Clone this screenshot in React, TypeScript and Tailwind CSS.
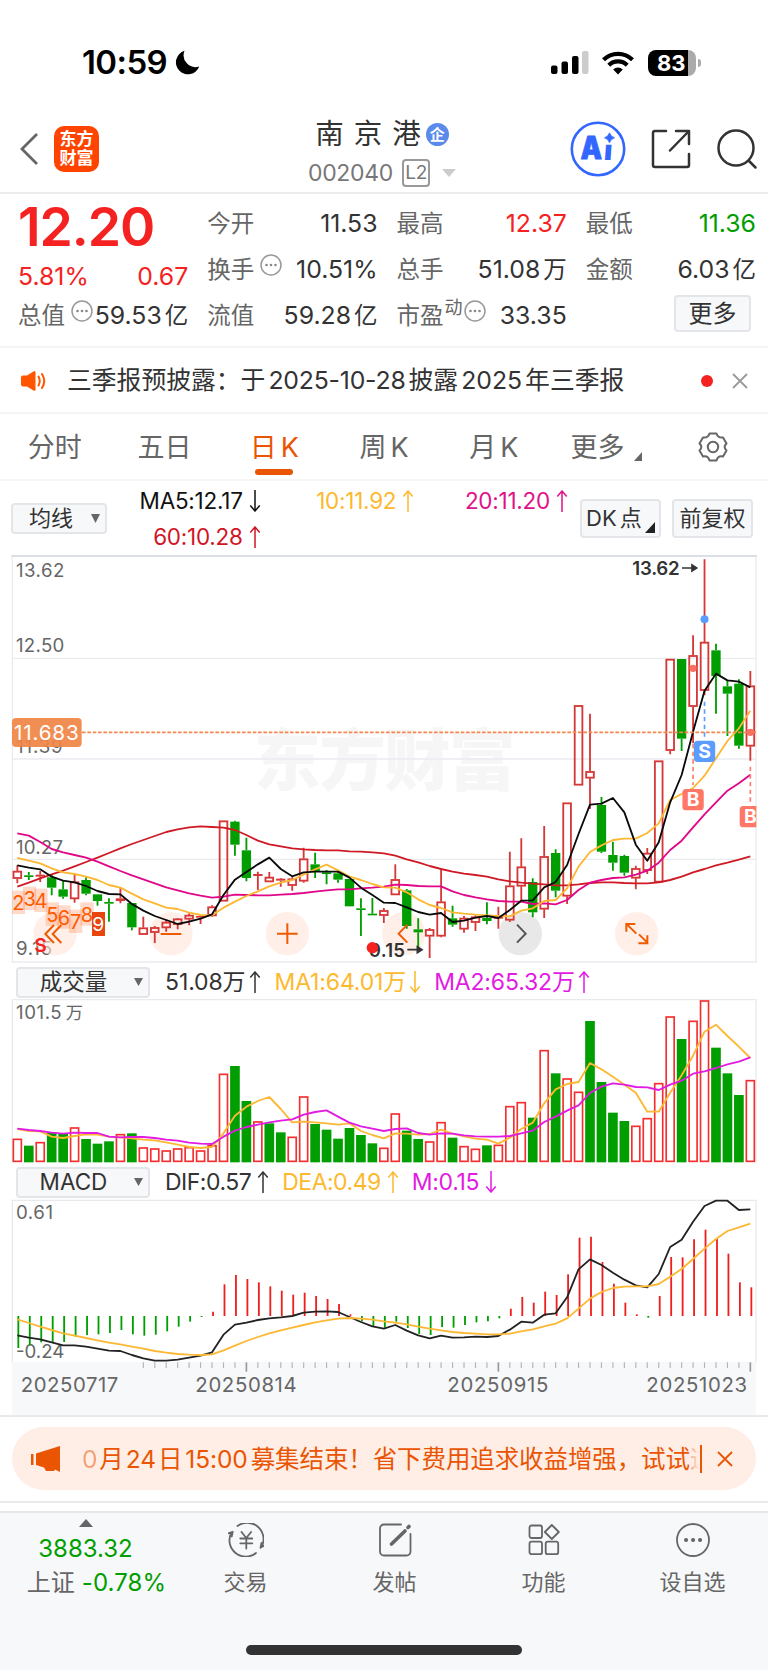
import type { ReactNode } from 'react';
import clsx from 'clsx';

// All charts are drawn on a 3x grid: 2304 units wide for a 768px page
const STEP = 34.36;
const FIRST = 52;
const xAt = (i: number) => FIRST + i * STEP;

const UP = '#d63838';
const DOWN = '#009e00';

type Candle = [dir: 'r' | 'g', top: number, bottom: number, high: number, low: number];

const candles: Candle[] = [
  ['r', 963, 986, 946, 1000], ['g', 976, 981, 966, 990], ['r', 974, 980, 963, 996], ['g', 982, 1013, 975, 1036],
  ['g', 1018, 1040, 993, 1046], ['r', 995, 1047, 972, 1058], ['g', 990, 1031, 982, 1036], ['g', 1033, 1053, 1033, 1067],
  ['g', 1056, 1061, 1045, 1115], ['r', 1045, 1053, 1012, 1060], ['g', 1059, 1132, 1059, 1141], ['r', 1133, 1154, 1100, 1154],
  ['r', 1132, 1148, 1128, 1179], ['r', 1116, 1134, 1108, 1145], ['r', 1106, 1124, 1104, 1138], ['r', 1095, 1108, 1090, 1126],
  ['r', 1098, 1103, 1094, 1122], ['r', 1070, 1098, 1066, 1100], ['r', 812, 1054, 812, 1054], ['g', 815, 884, 812, 917],
  ['g', 901, 984, 863, 994], ['r', 972, 978, 965, 1020], ['r', 981, 996, 966, 996], ['r', 986, 992, 984, 1010],
  ['r', 986, 1007, 982, 1022], ['r', 926, 994, 893, 998], ['g', 943, 966, 908, 984], ['g', 967, 972, 960, 1003],
  ['g', 970, 989, 966, 998], ['g', 987, 1069, 987, 1069], ['g', 1075, 1080, 1045, 1158], ['g', 1091, 1096, 1044, 1096],
  ['r', 1081, 1097, 1074, 1119], ['r', 988, 1035, 943, 1035], ['g', 1021, 1128, 1017, 1136], ['g', 1138, 1147, 1105, 1200],
  ['r', 1138, 1159, 1134, 1224], ['r', 1055, 1159, 957, 1162], ['g', 1105, 1124, 1067, 1130], ['r', 1104, 1138, 1098, 1148],
  ['r', 1100, 1118, 1096, 1143], ['g', 1104, 1113, 1057, 1123], ['r', 1101, 1106, 1070, 1136], ['r', 1007, 1111, 905, 1116],
  ['r', 950, 1009, 865, 1055], ['g', 996, 1087, 985, 1102], ['r', 919, 1078, 828, 1104], ['g', 909, 1022, 898, 1042],
  ['r', 758, 1039, 758, 1062], ['r', 466, 706, 466, 706], ['r', 664, 685, 491, 777], ['g', 765, 905, 741, 909],
  ['g', 915, 938, 875, 962], ['g', 918, 968, 914, 977], ['r', 955, 985, 947, 1018], ['r', 909, 962, 894, 972],
  ['r', 632, 997, 632, 997], ['r', 327, 602, 327, 613], ['g', 327, 566, 327, 603], ['r', 316, 470, 256, 580],
  ['r', 276, 422, 28, 436], ['g', 301, 378, 281, 491], ['g', 409, 431, 391, 558], ['g', 401, 587, 388, 596],
  ['r', 407, 589, 363, 632],
];

const ma5 = [
  946, 953, 958, 980, 992, 997, 1008, 1023, 1032, 1033, 1062, 1082, 1098, 1110, 1122, 1115, 1106, 1093, 1035, 989, 966, 943,
  923, 957, 979, 967, 965, 965, 965, 983, 1013, 1035, 1058, 1059, 1072, 1086, 1094, 1089, 1116, 1112, 1103, 1098, 1104, 1080,
  1052, 1051, 1012, 996, 945, 852, 764, 761, 744, 787, 884, 932, 877, 757, 675, 545, 422, 371, 391, 395, 412,
];
const ma10 = [
  924, 932, 940, 955, 967, 972, 980, 990, 1005, 1013, 1031, 1048, 1060, 1073, 1077, 1088, 1095, 1096, 1073, 1055, 1038, 1024,
  1009, 998, 990, 973, 958, 944, 961, 980, 990, 1002, 1012, 1013, 1027, 1048, 1065, 1074, 1087, 1091, 1094, 1096, 1098, 1099,
  1082, 1075, 1053, 1050, 1015, 950, 906, 886, 870, 866, 866, 849, 820, 750, 732, 714, 677, 625, 573, 535, 482,
];
const ma20 = [
  850, 857, 876, 897, 907, 915, 923, 935, 949, 963, 976, 988, 1000, 1012, 1021, 1030, 1037, 1043, 1040, 1034, 1035, 1036,
  1036, 1034, 1032, 1029, 1025, 1021, 1018, 1018, 1015, 1013, 1010, 1004, 1005, 1008, 1009, 1009, 1024, 1035, 1042, 1048,
  1053, 1055, 1055, 1062, 1060, 1063, 1050, 1020, 998, 990, 984, 982, 974, 962, 938, 900, 872, 832, 793, 757, 722, 700, 674,
];
const ma60 = [
  1010, 998, 985, 973, 962, 949, 936, 923, 909, 895, 882, 870, 858, 846, 838, 832, 829, 831, 833, 840, 855, 872, 883, 889,
  895, 898, 900, 901, 901, 904, 905, 907, 910, 917, 928, 937, 948, 957, 965, 971, 975, 980, 988, 994, 998, 1001, 1003, 1006,
  1006, 1003, 999, 997, 997, 999, 1000, 1000, 997, 990, 980, 967, 957, 946, 938, 929, 919,
];

// Days whose volume bar is green
const volumeDown = new Set([
  1, 3, 4, 6, 7, 8, 10, 19, 20, 22, 23, 26, 27, 28, 29, 30, 31, 34, 35, 38, 41, 45, 47, 50, 51, 52, 53, 58, 61, 62, 63,
]);
const volumeTops = [
  536, 557, 546, 516, 521, 502, 537, 551, 544, 522, 520, 562, 565, 571, 565, 561, 571, 555, 341, 318, 423, 484, 490, 517, 530,
  409, 492, 509, 536, 504, 525, 550, 563, 460, 512, 537, 544, 486, 533, 558, 566, 556, 554, 438, 426, 473, 270, 340, 355, 395,
  183, 366, 458, 483, 497, 474, 369, 169, 237, 182, 121, 263, 340, 405, 360,
];
const volMa1 = [
  507, 513, 514, 530, 534, 528, 523, 524, 530, 532, 535, 539, 541, 547, 554, 561, 564, 561, 520, 467, 440, 423, 411, 447, 487,
  485, 487, 490, 494, 490, 513, 525, 535, 520, 521, 524, 522, 509, 521, 529, 536, 539, 551, 533, 507, 488, 430, 388, 372, 366,
  309, 328, 350, 374, 398, 455, 455, 398, 346, 287, 215, 194, 228, 260, 294,
];
const volMa2 = [
  506, 510, 513, 518, 521, 518, 519, 519, 530, 532, 531, 531, 534, 539, 542, 548, 551, 552, 530, 512, 501, 494, 487, 482, 478,
  464, 456, 451, 470, 488, 499, 506, 513, 507, 505, 519, 524, 520, 521, 526, 529, 530, 530, 528, 520, 512, 486, 470, 452, 436,
  399, 380, 370, 374, 381, 382, 390, 374, 362, 341, 334, 324, 313, 305, 292,
];

const ZERO = 468;
const macdBars = [
  564, 556, 547, 546, 546, 530, 525, 523, 519, 510, 523, 527, 524, 514, 500, 485, 471, 455, 373, 345, 357, 367, 379, 392, 404,
  398, 408, 417, 432, 463, 484, 500, 503, 485, 504, 522, 525, 501, 503, 495, 487, 484, 475, 446, 411, 428, 395, 405, 343, 233,
  230, 306, 371, 428, 463, 473, 408, 291, 292, 238, 209, 236, 281, 367, 382,
];
const dif = [
  526, 533, 538, 547, 556, 556, 560, 566, 572, 573, 585, 595, 602, 602, 599, 593, 587, 577, 524, 494, 488, 480, 475, 472, 468,
  458, 455, 454, 456, 471, 486, 499, 506, 495, 512, 526, 535, 527, 533, 532, 530, 531, 528, 509, 485, 488, 464, 460, 412, 328,
  298, 315, 338, 359, 376, 382, 342, 261, 239, 185, 138, 122, 122, 150, 148,
];
const dea = [
  478, 489, 500, 510, 520, 527, 534, 541, 548, 553, 560, 566, 573, 578, 582, 584, 585, 583, 571, 557, 543, 531, 520, 511, 503,
  495, 487, 481, 476, 474, 476, 479, 484, 488, 493, 500, 506, 511, 516, 519, 521, 523, 523, 521, 514, 508, 499, 491, 475, 446,
  416, 396, 384, 380, 379, 379, 372, 350, 327, 297, 266, 237, 213, 202, 191,
];

function Line({ data, color, width = 5.5 }: { data: number[]; color: string; width?: number }) {
  return (
    <polyline
      points={data.map((y, i) => `${xAt(i).toFixed(1)},${y}`).join(' ')}
      fill="none"
      stroke={color}
      strokeWidth={width}
      strokeLinejoin="round"
    />
  );
}

function Label({ x, y, w, children, fill = '#666', size = 56, weight = 400 }: {
  x: number; y: number; w: number; children: string; fill?: string; size?: number; weight?: number;
}) {
  return (
    <text x={x} y={y} textLength={w} fontSize={size} fill={fill} fontWeight={weight}>{children}</text>
  );
}

function Arrow({ down = false }: { down?: boolean }) {
  return (
    <svg viewBox="0 0 12 22" className={clsx('h-[22px] w-3 shrink-0', down && 'rotate-180')} fill="none" stroke="currentColor" strokeWidth="1.5">
      <path d="M6 22V1M1.3 6.5 6 1l4.7 5.5" />
    </svg>
  );
}

function Info() {
  return (
    <svg viewBox="0 0 22 22" className="h-[22px] w-[22px] shrink-0">
      <circle cx="11" cy="11" r="10" fill="none" stroke="#999" strokeWidth="1.5" />
      <circle cx="6.5" cy="11" r="1.3" fill="#888" />
      <circle cx="11" cy="11" r="1.3" fill="#888" />
      <circle cx="15.5" cy="11" r="1.3" fill="#888" />
    </svg>
  );
}

function StatusBar() {
  return (
    <div className="flex h-[100px] items-center justify-between pt-[25px] pr-[67px] pl-[82px] text-black">
      <div className="flex items-center gap-[7px]">
        <span className="text-[33px] leading-none font-semibold tracking-[-0.6px]">10:59</span>
        <svg viewBox="0 0 26 26" className="h-[26px] w-[26px]">
          <path d="M10.5.8a12 12 0 1 0 14.7 15.6A11.8 11.8 0 0 1 10.5.8Z" />
        </svg>
      </div>
      <div className="flex items-center">
        <svg viewBox="0 0 38 25" className="h-[25px] w-[38px]">
          <rect x="0" y="15.5" width="6.5" height="8.5" rx="2" />
          <rect x="10.5" y="11.5" width="6.5" height="12.5" rx="2" />
          <rect x="21" y="6" width="6.5" height="18" rx="2" />
          <rect x="31" y="1" width="6.5" height="23" rx="2" fill="#ccc" />
        </svg>
        <svg viewBox="0 0 32 24" className="ml-[13px] h-6 w-8" fill="none" stroke="#000" strokeWidth="4.2">
          <path d="M1.5 8.8a20.6 20.6 0 0 1 29 0" />
          <path d="M6.8 14.2a13 13 0 0 1 18.4 0" />
          <path d="M16 23.5 11.2 18.5a7 7 0 0 1 9.6 0Z" fill="#000" stroke="none" />
        </svg>
        <div className="relative ml-[14px] flex h-[26px] w-12 items-center overflow-hidden rounded-[8px] bg-[linear-gradient(to_right,#000_83%,#aaa_83%)] pl-[9px]">
          <span className="text-[22px] leading-none font-bold text-white">83</span>
        </div>
        <div className="ml-[2px] h-2 w-[3px] rounded-r-full bg-[#aaa]" />
      </div>
    </div>
  );
}

function Header() {
  return (
    <div className="grid h-[94px] grid-cols-[1fr_auto_1fr] items-center border-b-2 border-[#ededed]">
      <div className="flex items-center pt-[6px] pl-5">
        <svg viewBox="0 0 18 32" className="h-8 w-[18px]" fill="none" stroke="#666" strokeWidth="2.8">
          <path d="M17 1 2 16l15 15" />
        </svg>
        <div className="ml-4 flex h-[46px] w-[45px] flex-col items-center justify-center rounded-[10px] bg-[#ff4400] text-[17px] leading-[19px] font-bold text-white">
          <span>东方</span>
          <span>财富</span>
        </div>
      </div>
      <div className="flex flex-col items-center pt-[15px] pr-1">
        <div className="flex h-[39px] items-center pb-[1px] text-[28.5px] text-[#333]">
          <span className="tracking-[10px]">南京港</span>
          <span className="-ml-[5px] flex h-[23px] w-[23px] items-center justify-center rounded-full bg-[#5a8aea] text-[15px] leading-none font-bold text-white">企</span>
        </div>
        <div className="flex h-[38px] items-center text-[23px] text-[#777]">
          <span className="tracking-[-0.3px]">002040</span>
          <span className="ml-[9px] flex h-7 w-7 items-center justify-center rounded-[4px] border-2 border-[#999] text-[19px] tracking-tight">L2</span>
          <svg viewBox="0 0 14 8" className="ml-3 h-2 w-[14px]"><path d="M0 0h14L7 8Z" fill="#ccc" /></svg>
        </div>
      </div>
      <div className="flex items-center justify-end pt-[6px] pr-[11px]">
        <svg viewBox="0 0 56 56" className="h-14 w-14" fill="#3366ff">
          <circle cx="28" cy="28" r="26.2" fill="none" stroke="#3366ff" strokeWidth="2.6" />
          <text x="10.5" y="38" fontSize="31" fontWeight="900" textLength="21.5" lengthAdjust="spacingAndGlyphs" stroke="#3366ff" strokeWidth="0.8" strokeLinejoin="round">A</text>
          <text x="36.3" y="39" fontSize="28" fontWeight="900" transform="skewX(-4)">ı</text>
          <path d="M39.5 11.8q1.2 3.8 5 5-3.8 1.2-5 5-1.2-3.8-5-5 3.8-1.2 5-5Z" stroke="#3366ff" strokeWidth="0.8" />
        </svg>
        <svg viewBox="0 0 40 40" className="ml-[25px] h-10 w-10" fill="none" stroke="#333" strokeWidth="2.5" strokeLinecap="round" strokeLinejoin="round">
          <path d="M15 2H4a2 2 0 0 0-2 2v32a2 2 0 0 0 2 2h32a2 2 0 0 0 2-2V25" />
          <path d="M25 2h13v13M37.5 2.5 19 21.5" />
        </svg>
        <svg viewBox="0 0 40 40" className="ml-[26px] h-10 w-10" fill="none" stroke="#333" strokeWidth="2.5" strokeLinecap="round">
          <circle cx="19" cy="19" r="17.5" />
          <path d="m32 32 6.5 6.5" />
        </svg>
      </div>
    </div>
  );
}

function Row({ label, extra, value, className }: { label: string; extra?: ReactNode; value: string; className?: string }) {
  const unit = /[万亿]$/.test(value);
  return (
    <div className="flex h-[46px] items-center justify-between whitespace-nowrap">
      <span className="flex items-start text-[#666]">
        <span className="leading-[30px]">{label}</span>
        {extra}
      </span>
      <span className={clsx('text-[#333]', className)}>
        <span className="text-[24.8px]">{unit ? value.slice(0, -1) : value}</span>
        {unit && <span className="ml-[3px]">{value.slice(-1)}</span>}
      </span>
    </div>
  );
}

function Quote() {
  return (
    <div className="grid h-[154px] grid-cols-4 gap-[19px] border-b-2 border-[#f5f5f5] pt-[7px] pr-3 pl-[18px] text-[23.5px]">
      <div className="whitespace-nowrap">
        <div className="h-[52px] text-[53.5px] leading-[52px] font-semibold tracking-[-1.1px] text-[#f52222]">12.20</div>
        <div className="flex h-[40px] items-end justify-between text-[24.8px] leading-[34px] text-[#f52222]">
          <span>5.81%</span>
          <span>0.67</span>
        </div>
        <Row label="总值" extra={<span className="-mt-[1px] ml-[6px]"><Info /></span>} value="59.53亿" />
      </div>
      <div>
        <Row label="今开" value="11.53" />
        <Row label="换手" extra={<span className="-mt-[1px] ml-[6px]"><Info /></span>} value="10.51%" />
        <Row label="流值" value="59.28亿" />
      </div>
      <div>
        <Row label="最高" value="12.37" className="!text-[#f52222]" />
        <Row label="总手" value="51.08万" />
        <Row
          label="市盈"
          extra={<><span className="-mt-[3px] ml-[1px] text-[18px] leading-5">动</span><span className="-mt-[1px] ml-[1px]"><Info /></span></>}
          value="33.35"
        />
      </div>
      <div>
        <Row label="最低" value="11.36" className="!text-[#009e00]" />
        <Row label="金额" value="6.03亿" />
        <div className="flex h-[42px] justify-end pt-[2px] pr-[5px]">
          <span className="flex h-[37px] w-[77px] items-center justify-center rounded-[4px] border-2 border-[#e3e5e9] bg-[#f7f8fa] text-[24px] text-[#333]">更多</span>
        </div>
      </div>
    </div>
  );
}

function Notice() {
  return (
    <div className="flex h-[66px] items-center border-b-2 border-[#f5f5f5] pt-[1px] pl-[21px] text-[24.8px] whitespace-nowrap text-[#333]">
      <svg viewBox="0 0 26 20" className="h-5 w-[26px]">
        <path d="M0 6.5a2 2 0 0 1 2-2h4L12.5.4q2-1 2 1v17q0 2-2 1L6 15.5H2a2 2 0 0 1-2-2Z" fill="#ff5500" />
        <path d="M17.5 5.5q2.5 4.5 0 9M21 3q4.5 7 0 14" fill="none" stroke="#ff5500" strokeWidth="2" strokeLinecap="round" />
      </svg>
      <span className="ml-5">三季报预披露：于<span className="mx-[3px] tracking-[-0.2px]">2025-10-28</span>披露<span className="mx-[3px]">2025</span>年三季报</span>
      <span className="ml-auto h-3 w-3 rounded-full bg-[#f52222]" />
      <svg viewBox="0 0 16 16" className="mr-5 ml-[19px] h-4 w-4" stroke="#999" strokeWidth="1.8"><path d="m1 1 14 14M15 1 1 15" /></svg>
    </div>
  );
}

function Tabs() {
  const tabs = ['分时', '五日', '日K', '周K', '月K'];
  return (
    <div className="grid h-[67px] grid-cols-7 border-b-2 border-[#f5f5f5] text-[27px] text-[#666]">
      {tabs.map((tab) => (
        <div key={tab} className={clsx('relative flex items-center justify-center pt-[3px]', tab === '日K' && 'text-[#ea5504]')}>
          {tab.endsWith('K') ? <span>{tab[0]}<span className="ml-1">K</span></span> : tab}
          {tab === '日K' && <span className="absolute bottom-[4px] h-[6px] w-[38px] rounded-full bg-[#ea5504]" />}
        </div>
      ))}
      <div className="flex items-center justify-center pt-[3px] pl-[6px]">
        更多
        <svg viewBox="0 0 8 9" className="mt-[17px] ml-[10px] h-[9px] w-2"><path d="M8 0v9H0Z" fill="#666" /></svg>
      </div>
      <div className="flex items-center justify-center">
        <svg viewBox="0 0 32 30" className="h-[30px] w-8" fill="none" stroke="#666" strokeWidth="2" strokeLinejoin="round">
          <path d="M12.5 1.5h7c1 3.5 3 4.5 6.5 4l3.5 6c-2.5 2.3-2.5 4.7 0 7l-3.5 6c-3.5-.8-5.5.5-6.5 4h-7c-1-3.5-3-4.8-6.5-4l-3.5-6c2.5-2.3 2.5-4.7 0-7l3.5-6c3.5.5 5.5-.5 6.5-4Z" />
          <circle cx="16" cy="15" r="5.2" />
        </svg>
      </div>
    </div>
  );
}

function Average({ children, down, className }: { children: string; down?: boolean; className: string }) {
  return (
    <span className={clsx('flex h-9 items-center justify-end gap-[6px] text-[22.5px] tracking-[-0.25px] whitespace-nowrap', className)}>
      {children}
      <Arrow down={down} />
    </span>
  );
}

function Averages() {
  return (
    <div className="flex h-[75px] pl-[11px]">
      <div className="mt-[22px] flex h-[31px] w-[96px] items-center rounded-[4px] border-2 border-[#e3e5e9] bg-[#f7f8fa] pl-4 text-[22px] text-[#333]">
        均线
        <svg viewBox="0 0 9 9" className="ml-[18px] h-[9px] w-[9px]"><path d="M0 0h9L4.5 9Z" fill="#666" /></svg>
      </div>
      <div className="grid w-[461px] grid-cols-3 content-start pt-[2px]">
        <Average down className="text-[#111]">MA5:12.17</Average>
        <Average className="text-[#fdb92e]">10:11.92</Average>
        <Average className="text-[#e0128a]">20:11.20</Average>
        <Average className="text-[#d01626]">60:10.28</Average>
      </div>
      <div className="relative mt-[18px] ml-[12px] flex h-[39px] w-[81px] items-center rounded-[4px] border-2 border-[#e3e5e9] bg-[#f7f8fa] pl-1 text-[22px] whitespace-nowrap text-[#333]">
        DK<span className="ml-[3px]">点</span>
        <svg viewBox="0 0 10 11" className="absolute right-1 bottom-[3px] h-[11px] w-[10px]"><path d="M10 0v11H0Z" fill="#222" /></svg>
      </div>
      <div className="mt-[18px] ml-[11px] flex h-[39px] w-[81px] items-center justify-center rounded-[4px] border-2 border-[#e3e5e9] bg-[#f7f8fa] text-[22px] whitespace-nowrap text-[#333]">
        前复权
      </div>
    </div>
  );
}

const streak: [n: string, x: number, y: number][] = [
  ['2', 55, 1058], ['3', 89, 1046], ['4', 123, 1052], ['5', 157, 1093], ['6', 192, 1102], ['7', 227, 1115], ['8', 261, 1093],
];

function Marker({ x, y, letter, color }: { x: number; y: number; letter: string; color: string }) {
  return (
    <g>
      <rect x={x - 32} y={y - 31} width="64" height="64" rx="11" fill={color} />
      <text x={x} y={y + 21} fontSize="58" fontWeight="700" fill="#fff" textAnchor="middle">{letter}</text>
    </g>
  );
}

function PriceChart() {
  const last = xAt(64);
  return (
    <svg viewBox="0 15 2304 1224" className="block h-[408px] w-[768px]">
      <defs>
        <clipPath id="pane"><rect x="36" y="15" width="2233" height="1224" /></clipPath>
      </defs>
      <text x="762" y="704" fontSize="200" fontWeight="900" fill="#f6f6f7" textLength="785">东方财富</text>
      <g stroke="#e9ecf0" strokeWidth="4">
        <path d="M36 325H2268M36 627H2268M36 928H2268" />
        <path d="M37 18V1236H2268V18" fill="none" />
        <path d="M34 18H2271" stroke="#dcdfe4" strokeWidth="6" />
      </g>
      <g clipPath="url(#pane)">
        <Label x={48} y={81} w={145}>13.62</Label>
        <Label x={48} y={305} w={145}>12.50</Label>
        <Label x={48} y={911} w={141}>10.27</Label>
        <Label x={48} y={1215} w={108}>9.15</Label>

        {/* Chart controls */}
        {[165, 513, 862, 1211, 1910].map((x) => (
          <circle key={x} cx={x} cy="1151" r="65" fill="#ffe5d8" fillOpacity="0.6" />
        ))}
        <circle cx="1561" cy="1151" r="65" fill="#dcdcdc" fillOpacity="0.65" />

        {/* Nine-turn sequence */}
        {streak.map(([n, x, y]) => (
          <rect key={n} x={x - 20} y={y - 36} width="40" height="70" fill="#ff6a2c" fillOpacity="0.25" />
        ))}
        {streak.map(([n, x, y]) => (
          <text key={n} x={x} y={y + 22} fontSize="60" fill="#ff5a00" textAnchor="middle">{n}</text>
        ))}
        <rect x="276" y="1086" width="39" height="72" fill="#e8450f" />
        <text x="295" y="1144" fontSize="58" fill="#fff" textAnchor="middle">9</text>

        {candles.map(([dir, top, bottom, high, low], i) => {
          const x = xAt(i);
          const color = dir === 'r' ? UP : DOWN;
          const hollow = dir === 'r' && bottom - top > 9;
          return (
            <g key={i} stroke={color} strokeWidth="5.5">
              <path d={`M${x} ${high}V${top}M${x} ${bottom}V${low}`} />
              {hollow ? (
                <rect x={x - 11.5} y={top + 2} width="23" height={bottom - top - 4} fill="none" />
              ) : (
                <rect x={x - 14} y={top} width="28" height={bottom - top} fill={color} stroke="none" />
              )}
            </g>
          );
        })}

        <Line data={ma60} color="#cf1a25" />
        <Line data={ma20} color="#e00789" />
        <Line data={ma10} color="#fdb833" />
        <Line data={ma5} color="#0a0a0a" />

        <path d="M246 547H2268" stroke="#f4894f" strokeWidth="5" strokeDasharray="11 5" />
        <Label x={48} y={609} w={140}>11.39</Label>
        <rect x="36" y="504" width="209" height="87" rx="12" fill="#f08445" fillOpacity="0.92" />
        <Label x={42} y={570} w={194} fill="#fff" size={62}>11.683</Label>

        <g fill="none" stroke="#f05a00" strokeWidth="6">
          <path d="m162 1125-26 27 26 27M184 1125l-26 27 26 27M482 1152h62M831 1151h62M862 1120v62" />
          <path d="m1222 1124-26 27 26 27" />
          <path d="M1909 1151l-28-28M1879 1145v-23h27M1917 1153l25 25M1942 1156v24h-27" />
          <path d="m1551 1124 26 27-26 27" stroke="#555" />
        </g>

        <text x="103" y="1206" fontSize="58" fontWeight="600" fill="#f52222">S</text>
        <Label x={1107} y={1220} w={108} fill="#333" weight={600}>9.15</Label>
        <circle cx="1117" cy="1193" r="17" fill="#f52222" />
        <path d="M1222 1199h42m-12-9 14 9-14 9Z" stroke="#333" strokeWidth="5" fill="#333" />
        <Label x={1897} y={75} w={142} fill="#333" weight={600}>13.62</Label>
        <path d="M2046 54h42m-12-9 14 9-14 9Z" stroke="#333" strokeWidth="5" fill="#333" />

        <g fill="none" strokeWidth="5" strokeDasharray="13 10">
          <path d={`M${xAt(59)} 582V705`} stroke="#ff7b6b" />
          <path d={`M${xAt(60)} 455V560`} stroke="#5b9dff" />
          <path d={`M${last} 650V760`} stroke="#ff7b6b" />
        </g>
        <circle cx={xAt(60)} cy="208" r="12" fill="#5b9dff" />
        <circle cx={xAt(59)} cy="355" r="11" fill="#f6715f" />
        <circle cx={last} cy="547" r="11" fill="#f6715f" />
        <Marker x={xAt(60)} y={603} letter="S" color="#5b9dff" />
        <Marker x={xAt(59)} y={748} letter="B" color="#ff7766" />
        <Marker x={last} y={799} letter="B" color="#ff7766" />
      </g>
    </svg>
  );
}

function Legend({ name, className, children }: { name: string; className?: string; children: ReactNode }) {
  return (
    <div className={clsx('flex items-center pl-4 text-[23px] whitespace-nowrap', className)}>
      <div className="mr-[15px] flex h-[31px] w-[134px] items-center rounded-[4px] border-2 border-[#e3e5e9] bg-[#f7f8fa] text-[22.5px] text-[#333]">
        <span className="w-[111px] text-center">{name}</span>
        <svg viewBox="0 0 9 8" className="ml-[5px] h-2 w-[9px]"><path d="M0 0h9L4.5 8Z" fill="#666" /></svg>
      </div>
      {children}
    </div>
  );
}

function VolumeChart() {
  return (
    <svg viewBox="0 114 2304 495" className="block h-[165px] w-[768px]">
      <path d="M37 609V119H2268V609" fill="none" stroke="#e9eaec" strokeWidth="4" />
      <Label x={48} y={177} w={137}>101.5</Label>
      <Label x={197} y={177} w={52} size={52}>万</Label>
      {volumeTops.map((top, i) =>
        volumeDown.has(i) ? (
          <rect key={i} x={xAt(i) - 14.5} y={top} width="29" height={607 - top} fill={DOWN} />
        ) : (
          <rect key={i} x={xAt(i) - 12} y={top + 2} width="24" height={602 - top} fill="#fff" stroke="#f52f2f" strokeWidth="5" />
        ),
      )}
      <Line data={volMa1} color="#fdb833" />
      <Line data={volMa2} color="#e21be2" />
    </svg>
  );
}

function MacdChart() {
  const ticks = Array.from({ length: 54 }, (_, i) => i + 11);
  return (
    <svg viewBox="0 117 2304 648" className="block h-[216px] w-[768px]">
      <rect x="36" y="606" width="2232" height="159" fill="#f7f8fa" />
      <path d="M37 606V121H2268V606" fill="none" stroke="#e9eaec" strokeWidth="4" />
      <Label x={48} y={177} w={111}>0.61</Label>
      <Label x={48} y={595} w={145}>-0.24</Label>
      {macdBars.map((y, i) => (
        <path key={i} d={`M${xAt(i) + 3} ${ZERO}V${y}`} stroke={y > ZERO ? DOWN : '#f01f1f'} strokeWidth="5.5" />
      ))}
      <Line data={dif} color="#222" />
      <Line data={dea} color="#fdb833" />
      {ticks.map((i) => {
        const major = i === 20 || i === 42 || i === 64;
        return <path key={i} d={`M${xAt(i)} 607v${major ? 28 : 17}`} stroke={major ? '#999' : '#b5b5b8'} strokeWidth={major ? 5 : 3.5} />;
      })}
      <Label x={62} y={696} w={293} size={61}>20250717</Label>
      <Label x={586} y={696} w={304} size={61}>20250814</Label>
      <Label x={1342} y={696} w={303} size={61}>20250915</Label>
      <Label x={1939} y={696} w={302} size={61}>20251023</Label>
    </svg>
  );
}

function Promo() {
  return (
    <div className="border-y-2 border-[#e9eaec] px-3 pt-[10px] pb-[11px]">
      <div className="flex h-[63px] items-center rounded-full bg-[#feeee5] pl-[19px] text-[24.5px] whitespace-nowrap text-[#ea5504]">
        <svg viewBox="0 0 30 26" className="h-[26px] w-[30px] shrink-0" fill="#ea5504">
          <path d="M0 8h2.5v11H0ZM5 7.5 29 0v26l-5-2.5-1 1.5H15l-2-3.5-8-2.5Z" />
        </svg>
        <div className="relative ml-[17px] flex w-[622px] overflow-hidden pt-[1px]">
          <span className="ml-[4px] tracking-[-0.1px]">
            <span className="opacity-50">0</span><span className="ml-[2px]">月</span><span className="mx-[2px]">24</span>日<span className="mx-[3px]">15:00</span>募集结束！省下费用追求收益增强，试试
          </span>
          <span className="bg-gradient-to-r from-[#ea5504]/50 to-[#ea5504]/0 to-40% bg-clip-text text-transparent">这</span>
        </div>
        <span className="h-7 w-[2px] bg-[#ea5504]" />
        <svg viewBox="0 0 16 16" className="ml-[15px] h-4 w-4" stroke="#ea5504" strokeWidth="1.8"><path d="m1 1 14 14M15 1 1 15" /></svg>
      </div>
    </div>
  );
}

const navItems: [label: string, icon: ReactNode][] = [
  ['交易', (
    <>
      <path d="M9.5 3A16.3 16.3 0 0 1 34 23M28 30A16.3 16.3 0 0 1 3.2 10" />
      <path d="M0 10.5l4.7-1.7-1 4.7M36 22.7l-3.5 2 1-4.7M13.5 9l4.8 6 4.8-6M12.3 15.5h12M12.3 20.3h12M18.3 15v10.5" />
    </>
  )],
  ['发帖', (
    <>
      <path d="M24 1.5H7a4 4 0 0 0-4 4v23a4 4 0 0 0 4 4h22.5a4 4 0 0 0 4-4V11" />
      <path d="M14.5 21 28 8" strokeWidth="3.6" />
      <path d="m31 4.5 1-1" strokeWidth="3.6" />
    </>
  )],
  ['功能', (
    <>
      <rect x="3.5" y="2.5" width="12.5" height="12.5" rx="2" />
      <rect x="3.5" y="18.7" width="12.5" height="12.5" rx="2" />
      <rect x="19.7" y="18.7" width="12.5" height="12.5" rx="2" />
      <path d="m25.8 2 7 7-7 7-7-7Z" />
    </>
  )],
  ['设自选', (
    <>
      <circle cx="18" cy="17" r="16" />
      <path d="M11 17h.1M18 17h.1M25 17h.1" strokeWidth="4" />
    </>
  )],
];

function BottomNav() {
  return (
    <div className="mt-2 flex h-[160px] flex-col items-center border-t-2 border-[#e5e7ea] bg-[#f7f8fa]">
      <div className="flex w-full text-[#666]">
        <div className="flex w-[171px] shrink-0 flex-col items-center pt-[6px] text-[24px] text-[#009e00]">
          <svg viewBox="0 0 14 8" className="h-2 w-[14px]"><path d="M0 8h14L7 0Z" fill="#666" /></svg>
          <span className="mt-1 leading-[36px]">3883.32</span>
          <span className="pl-[22px] leading-[32px] whitespace-nowrap"><span className="text-[#666]">上证</span><span className="ml-[7px] tracking-[0.1px]">-0.78%</span></span>
        </div>
        {navItems.map(([label, icon]) => (
          <div key={label} className="flex w-[149px] flex-col items-center pt-[10px]">
            <svg viewBox="0 0 36 34" className="h-[34px] w-9" fill="none" stroke="#666" strokeWidth="1.8" strokeLinecap="round" strokeLinejoin="round">{icon}</svg>
            <span className="mt-[9px] text-[22px] leading-[32px]">{label}</span>
          </div>
        ))}
      </div>
      <div className="mt-auto mb-4 h-[10px] w-[276px] rounded-full bg-[#333]" />
    </div>
  );
}

export default function App() {
  return (
    <div className="h-[1670px] w-[768px] overflow-hidden bg-white font-['Inter','Noto_Sans_CJK_SC',sans-serif]">
      <StatusBar />
      <Header />
      <Quote />
      <Notice />
      <Tabs />
      <Averages />
      <div className="-mt-[1px]"><PriceChart /></div>
      <Legend name="成交量" className="h-[35px] pt-[3px]">
        <span className="mr-[3px] tracking-[-0.1px] text-[#333]">51.08万</span>
        <span className="text-[#333]"><Arrow /></span>
        <span className="mr-[3px] ml-[14px] tracking-[-0.15px] text-[#fdb92e]">MA1:64.01万</span>
        <span className="text-[#fdb92e]"><Arrow down /></span>
        <span className="mr-[3px] ml-[13px] tracking-[-0.15px] text-[#e21be2]">MA2:65.32万</span>
        <span className="text-[#e21be2]"><Arrow /></span>
      </Legend>
      <VolumeChart />
      <Legend name="MACD" className="h-[36px] pt-[2px]">
        <span className="mr-[6px] tracking-[-0.5px] text-[#333]">DIF:0.57</span>
        <span className="text-[#333]"><Arrow /></span>
        <span className="mr-[6px] ml-[13px] tracking-[-0.5px] text-[#fdb92e]">DEA:0.49</span>
        <span className="text-[#fdb92e]"><Arrow /></span>
        <span className="mr-[6px] ml-[13px] tracking-[-0.3px] text-[#e21be2]">M:0.15</span>
        <span className="text-[#e21be2]"><Arrow down /></span>
      </Legend>
      <MacdChart />
      <Promo />
      <BottomNav />
    </div>
  );
}
